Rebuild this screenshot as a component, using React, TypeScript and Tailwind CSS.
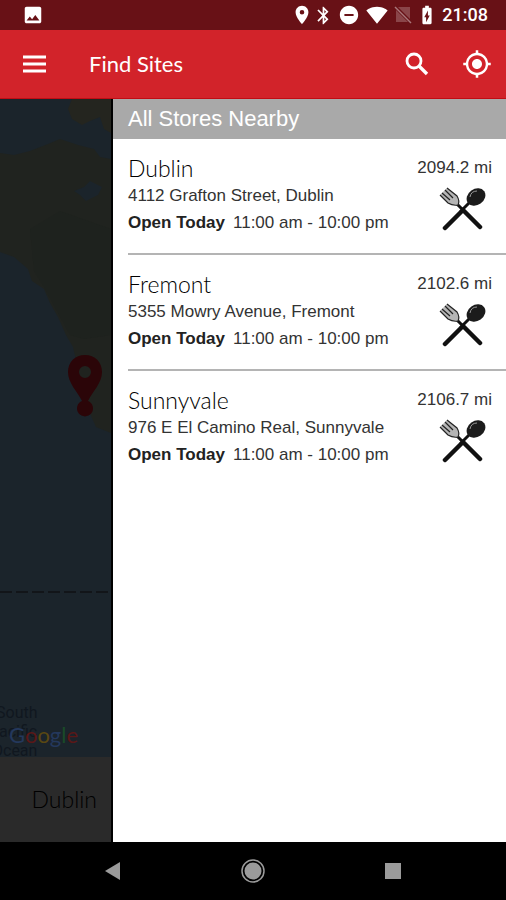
import {
  MdBatteryChargingFull,
  MdBluetooth,
  MdDoNotDisturbOn,
  MdImage,
  MdLocationOn,
  MdMyLocation,
  MdSignalWifi4Bar,
} from "react-icons/md";

interface Store {
  name: string;
  address: string;
  hours: string;
  distance: string;
}

const stores: Store[] = [
  {
    name: "Dublin",
    address: "4112 Grafton Street, Dublin",
    hours: "11:00 am - 10:00 pm",
    distance: "2094.2 mi",
  },
  {
    name: "Fremont",
    address: "5355 Mowry Avenue, Fremont",
    hours: "11:00 am - 10:00 pm",
    distance: "2102.6 mi",
  },
  {
    name: "Sunnyvale",
    address: "976 E El Camino Real, Sunnyvale",
    hours: "11:00 am - 10:00 pm",
    distance: "2106.7 mi",
  },
];

function NoSignalIcon() {
  return (
    <svg width="18" height="18" viewBox="0 0 18 18" aria-hidden="true">
      <path d="M4 1 H16 V13 Z M2 4 L14 16 H2 Z" fill="#8a4549" />
      <path d="M1 1 L17 17" stroke="#a8777a" strokeWidth="1.5" />
    </svg>
  );
}

function StatusBar() {
  return (
    <div className="flex h-[30px] items-center justify-between bg-[#681116] pl-[22px] pr-[18px] text-white">
      <MdImage size={22} />
      <div className="flex items-center">
        <MdLocationOn size={22} />
        <MdBluetooth size={21} />
        <MdDoNotDisturbOn size={22} className="ml-[4px]" />
        <MdSignalWifi4Bar size={22} className="ml-[6px]" />
        <span className="ml-[6px]">
          <NoSignalIcon />
        </span>
        <MdBatteryChargingFull size={22} className="ml-[4px]" />
        <span className="ml-[4px] font-['Roboto',sans-serif] text-[18px] font-medium leading-none">21:08</span>
      </div>
    </div>
  );
}

function AppBar() {
  return (
    <header className="flex h-[69px] items-center border-b border-[#c00d14] bg-[#d2232a] pl-[20px] pr-[14px] text-white">
      <button type="button" aria-label="Menu">
        <svg width="30" height="30" viewBox="0 0 30 30">
          <path d="M3 8 H26 M3 15 H26 M3 22 H26" stroke="currentColor" strokeWidth="3" />
        </svg>
      </button>
      <h1 className="ml-[39px] flex-1 font-['Lato',sans-serif] text-[22px] leading-7">Find Sites</h1>
      <button type="button" aria-label="Search">
        <svg width="30" height="30" viewBox="0 0 30 30" fill="none" stroke="currentColor">
          <circle cx="12" cy="12" r="7" strokeWidth="2.8" />
          <path d="M17 17 L25 25" strokeWidth="3.4" />
        </svg>
      </button>
      <button type="button" aria-label="My location" className="ml-[30px]">
        <MdMyLocation size={30} />
      </button>
    </header>
  );
}

function MapDrawing() {
  return (
    <svg
      className="absolute inset-0 h-full w-full"
      viewBox="0 0 111 658"
      preserveAspectRatio="xMinYMin slice"
      fontFamily="Roboto, sans-serif"
    >
      <rect width="111" height="658" fill="#1b242b" />
      {/* coastline */}
      <path
        d="M0 54 L14 56 L30 52 L48 45 L60 40 L78 46 L94 50 L100 58 L111 60 V334 L96 328 L88 310 L78 270 L73 248 L66 236 L58 218 L50 204 L44 190 L32 182 L28 170 L14 158 L0 153 Z"
        fill="#20231f"
      />
      <path
        d="M30 130 L60 112 L111 130 V236 L84 240 L70 236 L58 214 L44 188 L34 172 Z"
        fill="#1e221e"
      />
      <path d="M72 0 H111 V34 L104 30 L100 18 L90 22 L82 26 L72 20 L68 10 Z" fill="#24251f" />
      <path d="M74 92 L84 88 L90 82 L102 88 L98 96 L86 102 L80 96 Z" fill="#1b242b" />
      <path d="M0 493 H111" stroke="#121519" strokeWidth="2" strokeDasharray="12 4" />
      {/* location pin */}
      <path
        fillRule="evenodd"
        d="M85 256 C75 256 68 263 68 273 C68 284 77 292 82 302 A8 8 0 1 0 88 302 C93 292 102 284 102 273 C102 263 95 256 85 256 Z M85 267 A6 6 0 1 1 85 279 A6 6 0 1 1 85 267 Z"
        fill="#2b0508"
      />
      <g fill="#10171f" fontSize="16">
        <text x="-4" y="619">South</text>
        <text x="-11" y="638">Pacific</text>
        <text x="-8" y="657">Ocean</text>
      </g>
      <text x="9" y="644" fontSize="22" fontFamily="Lato, sans-serif">
        <tspan fill="#24385c">G</tspan>
        <tspan fill="#5a1717">o</tspan>
        <tspan fill="#5a4812">o</tspan>
        <tspan fill="#24385c">g</tspan>
        <tspan fill="#1a4a28">l</tspan>
        <tspan fill="#5a1717">e</tspan>
      </text>
    </svg>
  );
}

function UtensilsIcon() {
  return (
    <svg width="48" height="44" viewBox="0 0 48 44" aria-hidden="true">
      <g stroke="#111" strokeLinecap="round">
        <path d="M18 17 L24 23 M30 16 L22 24" strokeWidth="3" />
        <path d="M24 23 L41 40 M23 24 L6 41" strokeWidth="4.5" />
      </g>
      {/* fork head */}
      <path d="M8 1 L18 9 Q21 14 19 18 Q14 19 9 16 L1 8 Z" fill="#b5b5b5" />
      <path
        d="M8 1 L18 9 Q21 14 19 18 Q14 19 9 16 L1 8 M6 3 L14 11 M3 6 L11 13"
        fill="none"
        stroke="#222"
        strokeWidth="1.2"
      />
      {/* spoon head */}
      <ellipse cx="37" cy="10" rx="10" ry="8" transform="rotate(-35 37 10)" fill="#1b1b1b" />
      <path d="M31 10 Q32 4 38 4" stroke="#999" strokeWidth="1" fill="none" />
    </svg>
  );
}

function StoreRow({ store }: { store: Store }) {
  return (
    <li className="flex justify-between border-b-2 border-[#b4b4b4] pb-[17px] pr-[14px] pt-[15px] last:border-b-0">
      <div>
        <h3 className="font-['Lato',sans-serif] text-[23px] font-light leading-7">{store.name}</h3>
        <p className="text-[17px] leading-[27px] text-[#333]">{store.address}</p>
        <p className="text-[17px] leading-[27px] text-[#333]">
          <span className="mr-[8px] font-bold text-[#222]">Open Today</span>
          {store.hours}
        </p>
      </div>
      <div className="flex flex-col items-end">
        <span className="text-[17px] leading-7 text-[#333]">{store.distance}</span>
        <div className="mr-[5px] mt-[5px]">
          <UtensilsIcon />
        </div>
      </div>
    </li>
  );
}

function NavBar() {
  return (
    <nav className="grid h-[58px] grid-cols-3 items-center justify-items-center bg-black px-[43px]">
      <button type="button" aria-label="Back">
        <svg width="20" height="20" viewBox="0 0 20 20">
          <path d="M2 10 L17 1 V19 Z" fill="#9b9b9b" />
        </svg>
      </button>
      <button type="button" aria-label="Home">
        <svg width="24" height="24" viewBox="0 0 24 24">
          <circle cx="12" cy="12" r="11" fill="none" stroke="#9b9b9b" strokeWidth="1.5" />
          <circle cx="12" cy="12" r="8.5" fill="#9b9b9b" />
        </svg>
      </button>
      <button type="button" aria-label="Recent apps">
        <svg width="16" height="16" viewBox="0 0 16 16">
          <rect width="16" height="16" fill="#9b9b9b" />
        </svg>
      </button>
    </nav>
  );
}

function App() {
  return (
    <div className="flex min-h-screen flex-col bg-black font-['Liberation_Sans',Arial,sans-serif]">
      <StatusBar />
      <AppBar />
      <main className="flex flex-1">
        <aside className="flex w-[113px] shrink-0 flex-col border-r-2 border-black">
          <div className="relative flex-1 overflow-hidden">
            <MapDrawing />
          </div>
          <div className="flex h-[85px] items-center justify-end bg-[#2a2a2a] pr-[14px] font-['Lato',sans-serif] text-[23px] font-light text-black">
            Dublin
          </div>
        </aside>
        <section className="flex-1 bg-white">
          <h2 className="bg-[#a9a9a9] px-[15px] text-[22px] leading-10 text-white">All Stores Nearby</h2>
          <ul className="pl-[15px]">
            {stores.map((store) => (
              <StoreRow key={store.name} store={store} />
            ))}
          </ul>
        </section>
      </main>
      <NavBar />
    </div>
  );
}

export default App;
